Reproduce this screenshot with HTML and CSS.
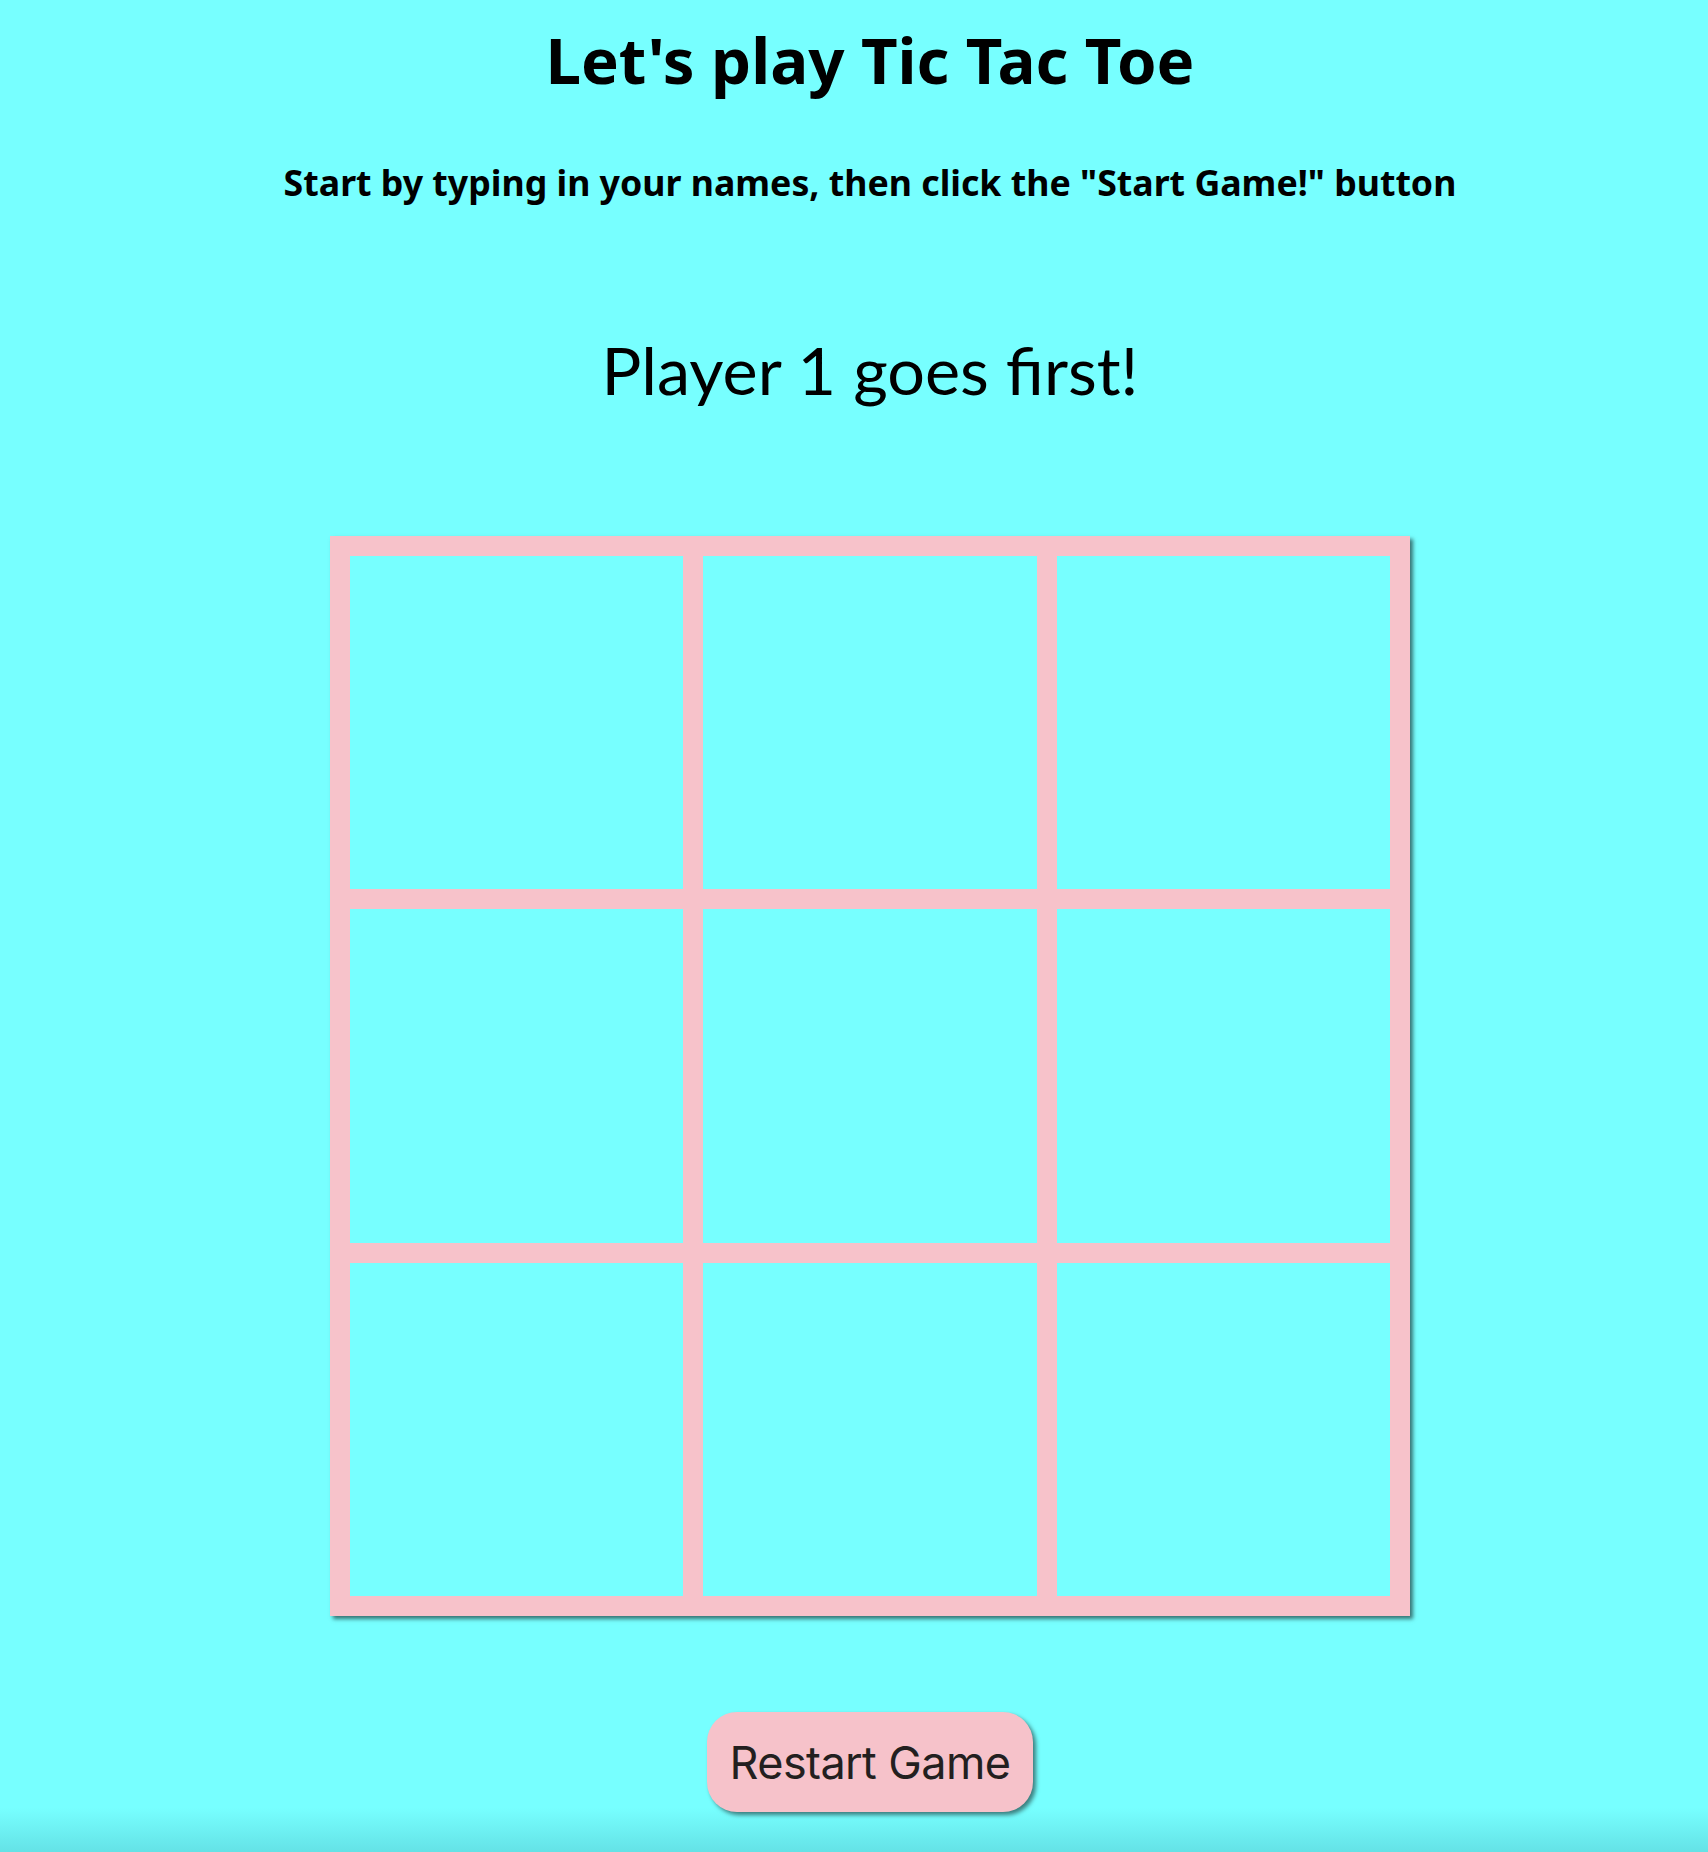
FILE: index.html
```html
<!DOCTYPE html>
<html lang="en">
<head>
<meta charset="utf-8">
<title>Tic Tac Toe</title>
<link rel="stylesheet" href="styles.css">
</head>
<body>
<main class="page">
  <h1 class="title">Let's play Tic Tac Toe</h1>
  <h3 class="subtitle">Start by typing in your names, then click the "Start Game!" button</h3>
  <h2 class="status">Player 1 goes first!</h2>
  <div class="board">
    <div class="cell"></div>
    <div class="cell"></div>
    <div class="cell"></div>
    <div class="cell"></div>
    <div class="cell"></div>
    <div class="cell"></div>
    <div class="cell"></div>
    <div class="cell"></div>
    <div class="cell"></div>
  </div>
  <button class="restart" type="button">Restart Game</button>
</main>
</body>
</html>
```
FILE: styles.css
```css
html, body {
  margin: 0;
  padding: 0;
}
body {
  min-height: 100vh;
  background: linear-gradient(to bottom, #77ffff 0, #77ffff calc(100% - 44px), #64e2e6 100%);
  color: #000;
}
.page {
  display: flex;
  flex-direction: column;
  align-items: center;
  padding-left: 32px;
  padding-top: 28px;
}
.title {
  margin: 0;
  font-family: "Noto Sans", sans-serif;
  font-weight: 700;
  font-size: 63.5px;
  line-height: 63px;
}
.subtitle {
  margin: 73px 0 0;
  font-family: "Noto Sans", sans-serif;
  font-weight: 700;
  font-size: 35.7px;
  line-height: 36px;
}
.status {
  margin: 137px 0 0;
  font-family: "Lato", sans-serif;
  font-weight: 400;
  font-size: 66.5px;
  line-height: 65px;
}
.board {
  margin-top: 134px;
  width: 1080px;
  height: 1080px;
  box-sizing: border-box;
  padding: 20px;
  display: grid;
  grid-template-columns: repeat(3, 1fr);
  grid-template-rows: repeat(3, 1fr);
  gap: 20px;
  background: #f7c2ca;
  box-shadow: 3px 3px 4px rgba(0, 0, 0, 0.55);
}
.cell {
  background: #77ffff;
}
.restart {
  margin-top: 96px;
  height: 100px;
  padding: 0 23px;
  border: none;
  border-radius: 30px;
  background: #f6c2ca;
  color: #231f20;
  font-family: "Inter", sans-serif;
  font-size: 45px;
  letter-spacing: -0.6px;
  box-shadow: 3px 3px 4px rgba(0, 0, 0, 0.5);
  cursor: pointer;
}
```
